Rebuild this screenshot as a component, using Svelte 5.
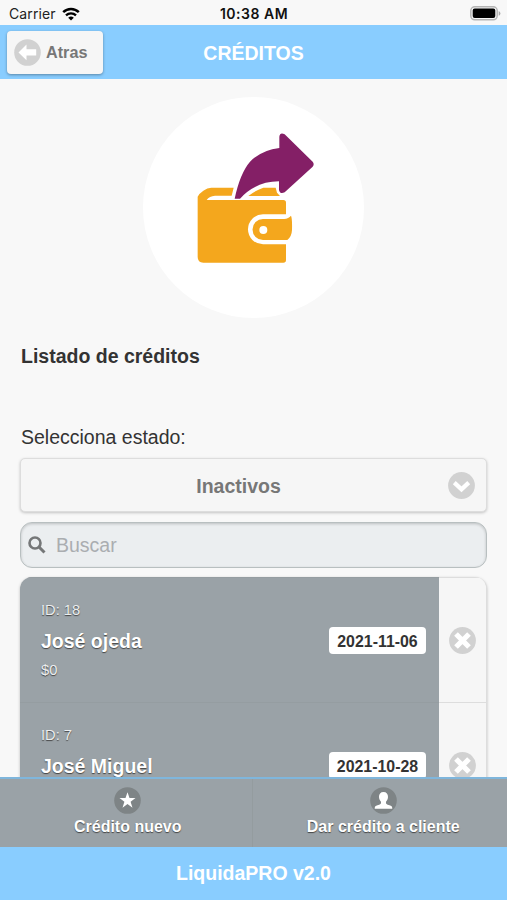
<!-- Credits list page -->
<script>
  let selected_state = 'Inactivos';
  let search = '';

  const states = ['Activos', 'Inactivos'];

  let credits = [
    { id: 18, name: 'José ojeda', amount: 0, date: '2021-11-06' },
    { id: 7, name: 'José Miguel', amount: 0, date: '2021-10-28' },
  ];

  $: visible = credits.filter((c) => c.name.toLowerCase().includes(search.toLowerCase()));

  function remove_credit(id) {
    credits = credits.filter((c) => c.id !== id);
  }
</script>

<div class="page">
  <div class="status">
    <div class="carrier">
      <span>Carrier</span>
      <svg width="18" height="14" viewBox="0 0 18 14">
        <path d="M1.2 5.2a11.2 11.2 0 0 1 15.6 0" fill="none" stroke="#000" stroke-width="2.5" />
        <path d="M4 8.4a7.2 7.2 0 0 1 10 0" fill="none" stroke="#000" stroke-width="2.3" />
        <path d="M9 13.6 6.2 10.8a4.1 4.1 0 0 1 5.6 0z" />
      </svg>
    </div>
    <span class="clock">10:38 AM</span>
    <svg class="battery" width="31" height="15" viewBox="0 0 31 15">
      <rect x=".8" y=".8" width="26.4" height="13" rx="4" fill="#f7f7f7" stroke="#b4b4b4" stroke-width="1.5" />
      <rect x="2.7" y="2.6" width="22.6" height="9.4" rx="2" />
      <path d="M28.7 5v4.8q1.7-.7 1.7-2.4T28.7 5z" fill="#aaa" />
    </svg>
  </div>

  <header>
    <button class="back">
      <svg width="27" height="27" viewBox="0 0 27 27">
        <circle cx="13.5" cy="13.5" r="13.3" fill="#d1d1d1" />
        <path d="M4.5 13.4 12.5 5.600v4.700h9.700v6.200h-9.700v4.700z" fill="#fff" />
      </svg>
      <span>Atras</span>
    </button>
    <h1>CRÉDITOS</h1>
  </header>

  <main>
    <div class="logo">
      <svg width="221" height="221" viewBox="9 21 663 663">
        <path d="M284 326Q300 250 330 215 365 180 418 174V140Q420 126 434 133L518 215Q524 223 518 230L434 307Q420 314 417 300V274Q345 275 300 326Z" fill="#841f66" />
        <path d="M173 320Q178 310 190 302 202 293 214 293H281L275 317H225Q208 318 200 330H430Q438 330 438 338V510Q438 518 430 518H190Q173 518 173 501Z" fill="#f4a71d" />
        <path d="M325 318Q345 302 370 293H407Q409 300 411 308L420 318Z" fill="#f4a71d" />
        <path d="M456 373H369A45 45 0 0 0 369 463H456Z" fill="#fff" />
        <path d="M369 387H432Q446 386 453 377 457 385 456 420 455 440 442 450H369A31.5 31.5 0 0 1 369 387Z" fill="#f4a71d" />
        <circle cx="370" cy="420" r="12" fill="#fff" />
      </svg>
    </div>

    <h2>Listado de créditos</h2>

    <label for="state">Selecciona estado:</label>
    <div class="select">
      <select id="state" bind:value={selected_state}>
        {#each states as state}
          <option>{state}</option>
        {/each}
      </select>
      <svg width="27" height="27" viewBox="0 0 27 27">
        <circle cx="13.5" cy="13.5" r="13.4" fill="#d1d1d1" />
        <path d="m6.3 10.6 7.2 6.800 7.200-6.800" fill="none" stroke="#fff" stroke-width="4.200" />
      </svg>
    </div>

    <div class="search">
      <svg width="18" height="18" viewBox="0 0 18 18" fill="none" stroke="#757778">
        <circle cx="7" cy="7" r="5.5" stroke-width="2.6" />
        <path d="m11 11 5.500 5.500" stroke-width="3" />
      </svg>
      <input type="text" placeholder="Buscar" bind:value={search} />
    </div>

    <ul>
      {#each visible as credit}
        <li>
          <div class="info">
            <div>
              <p>ID: {credit.id}</p>
              <h3>{credit.name}</h3>
              <p>${credit.amount}</p>
            </div>
            <span class="date">{credit.date}</span>
          </div>
          <button class="remove" aria-label="Eliminar" on:click={() => remove_credit(credit.id)}>
            <svg width="27" height="27" viewBox="0 0 27 27">
              <circle cx="13.5" cy="13.5" r="13.4" fill="#d1d1d1" />
              <path d="m7 7 13 13M20 7 7 20" stroke="#fff" stroke-width="5.2" />
            </svg>
          </button>
        </li>
      {/each}
    </ul>
  </main>

  <nav>
    <button>
      <svg width="27" height="27" viewBox="0 0 27 27">
        <circle cx="13.5" cy="13.5" r="13.3" fill="#7e8486" />
        <path d="m13.5 5.2 2 5.800h6l-4.900 3.700 1.900 6-5-3.600-5 3.600 1.900-6L5.500 11h6z" fill="#fff" />
      </svg>
      <span>Crédito nuevo</span>
    </button>
    <button>
      <svg width="27" height="27" viewBox="0 0 27 27">
        <circle cx="13.5" cy="13.5" r="13.3" fill="#7e8486" />
        <path d="M13.5 5c3 0 4.600 2 4.500 5-.1 2.300-1 3.500-2 4.800-.4 2.400.7 2.700 3.500 3.400 2 .6 2.800 1.200 2.800 3.600H4.700c0-2.400.8-3 2.800-3.600 2.800-.7 3.900-1 3.500-3.400-1-1.300-1.900-2.500-2-4.800C8.900 7 10.500 5 13.500 5z" fill="#fff" />
      </svg>
      <span>Dar crédito a cliente</span>
    </button>
  </nav>

  <footer>LiquidaPRO v2.0</footer>
</div>

<style>
  :global(body) {
    margin: 0;
    background-color: #f8f8f8;
  }

  .page {
    display: flex;
    flex-direction: column;
    height: 900px;
    overflow: hidden;
    font-family: "Liberation Sans", Arial, sans-serif;
    font-size: 19.5px;
    color: #333;
  }

  .page * {
    box-sizing: border-box;
  }

  svg {
    display: block;
    flex: none;
  }

  button {
    font: inherit;
    border: 0;
    padding: 0;
    cursor: pointer;
  }

  .status {
    display: grid;
    grid-template-columns: 1fr auto 1fr;
    align-items: center;
    height: 25px;
    padding: 2px 6px 0 9px;
    font-family: Inter, sans-serif;
    font-size: 14px;
    color: #222;
  }

  .carrier {
    display: flex;
    align-items: center;
    gap: 6px;
    letter-spacing: 0.1px;
  }

  .clock {
    margin-left: -2px;
    font-weight: 600;
    letter-spacing: 0.5px;
    color: #111;
  }

  .battery {
    justify-self: end;
  }

  header {
    display: grid;
    grid-template-columns: 1fr auto 1fr;
    align-items: center;
    height: 54px;
    padding: 0 7px;
    background-color: #89cdff;
    color: #fff;
  }

  .back {
    display: flex;
    align-items: center;
    gap: 5px;
    width: 96px;
    height: 43px;
    padding-left: 7px;
    border-radius: 4px;
    background-color: #f6f6f6;
    box-shadow: 0 1px 3px rgba(0, 0, 0, 0.35);
    color: #777;
    font-size: 16.2px;
    font-weight: bold;
  }

  .back span {
    padding-top: 1px;
  }

  h1 {
    margin: 0;
    padding-top: 2px;
    font-size: 19.5px;
  }

  main {
    height: 698px;
    padding: 18px 20px 0;
    overflow: hidden;
  }

  .logo {
    width: 221px;
    height: 221px;
    margin: 0 auto;
    border-radius: 50%;
    background-color: #fff;
  }

  h2 {
    margin: 27px 0 0 1px;
    font-size: 19.5px;
    line-height: 22px;
  }

  label {
    display: block;
    margin: 59px 0 10px 1px;
    line-height: 22px;
  }

  .select {
    display: flex;
    align-items: center;
    height: 54px;
    padding-right: 11px;
    border: 1px solid #ddd;
    border-radius: 5px;
    background-color: #f6f6f6;
    box-shadow: 0 1px 3px rgba(0, 0, 0, 0.22);
  }

  select {
    flex: 1;
    height: 100%;
    padding: 2px 0 0 8px;
    border: 0;
    appearance: none;
    background: none;
    color: #777;
    font: inherit;
    font-weight: bold;
    text-align: center;
    text-align-last: center;
  }

  .search {
    display: flex;
    align-items: center;
    gap: 10px;
    height: 46px;
    margin: 10px 0 9px;
    padding: 0 7px;
    border: 1px solid #b8bfc0;
    border-radius: 12px;
    background-color: #ebeef0;
    box-shadow: inset 0 1px 3px rgba(0, 0, 0, 0.2);
  }

  input {
    flex: 1;
    padding: 1px 0 0;
    border: 0;
    background: none;
    font: inherit;
  }

  input::placeholder {
    color: #aaadb0;
    opacity: 1;
  }

  ul {
    margin: 0;
    padding: 0;
    list-style: none;
    border-radius: 12px;
    overflow: hidden;
    border-right: 1px solid #ddd;
    background-color: #f6f6f6;
    box-shadow: 0 1px 3px rgba(0, 0, 0, 0.25);
  }

  li {
    display: flex;
    height: 124.5px;
    border-top: 1px solid #ddd;
  }

  .info {
    display: flex;
    justify-content: space-between;
    align-items: center;
    width: 419px;
    margin-top: -1px;
    padding: 2px 13px 0 21px;
    border-top: 1px solid #959da1;
    background-color: #9aa2a7;
    color: #fff;
    text-shadow: 0 1px 1px #444;
  }

  h3 {
    margin: 10px 0 9px;
    font-size: 19.5px;
    line-height: 22px;
  }

  p {
    margin: 0;
    font-size: 14.7px;
    line-height: 19px;
    color: #eceeef;
  }

  .date {
    width: 97px;
    height: 27px;
    border-radius: 4px;
    background-color: #fff;
    color: #333;
    font-size: 15.9px;
    font-weight: bold;
    line-height: 29px;
    text-align: center;
    text-shadow: none;
  }

  .remove {
    display: flex;
    flex: 1;
    align-items: center;
    justify-content: center;
    padding-top: 2px;
    background-color: #f6f6f6;
  }

  nav {
    display: flex;
    height: 70px;
    border-top: 2px solid #7fb6dc;
  }

  nav button {
    display: flex;
    flex: 1;
    flex-direction: column;
    align-items: center;
    gap: 4px;
    padding: 8px 0 0 4px;
    background-color: #9aa2a7;
    color: #fff;
    font-size: 16px;
    font-weight: bold;
    line-height: 18px;
    text-shadow: 0 1px 1px #444;
  }

  nav button + button {
    padding-left: 7px;
    border-left: 1px solid #949c9f;
  }

  footer {
    height: 53px;
    background-color: #89cdff;
    color: #fff;
    font-weight: bold;
    line-height: 53px;
    text-align: center;
  }
</style>
